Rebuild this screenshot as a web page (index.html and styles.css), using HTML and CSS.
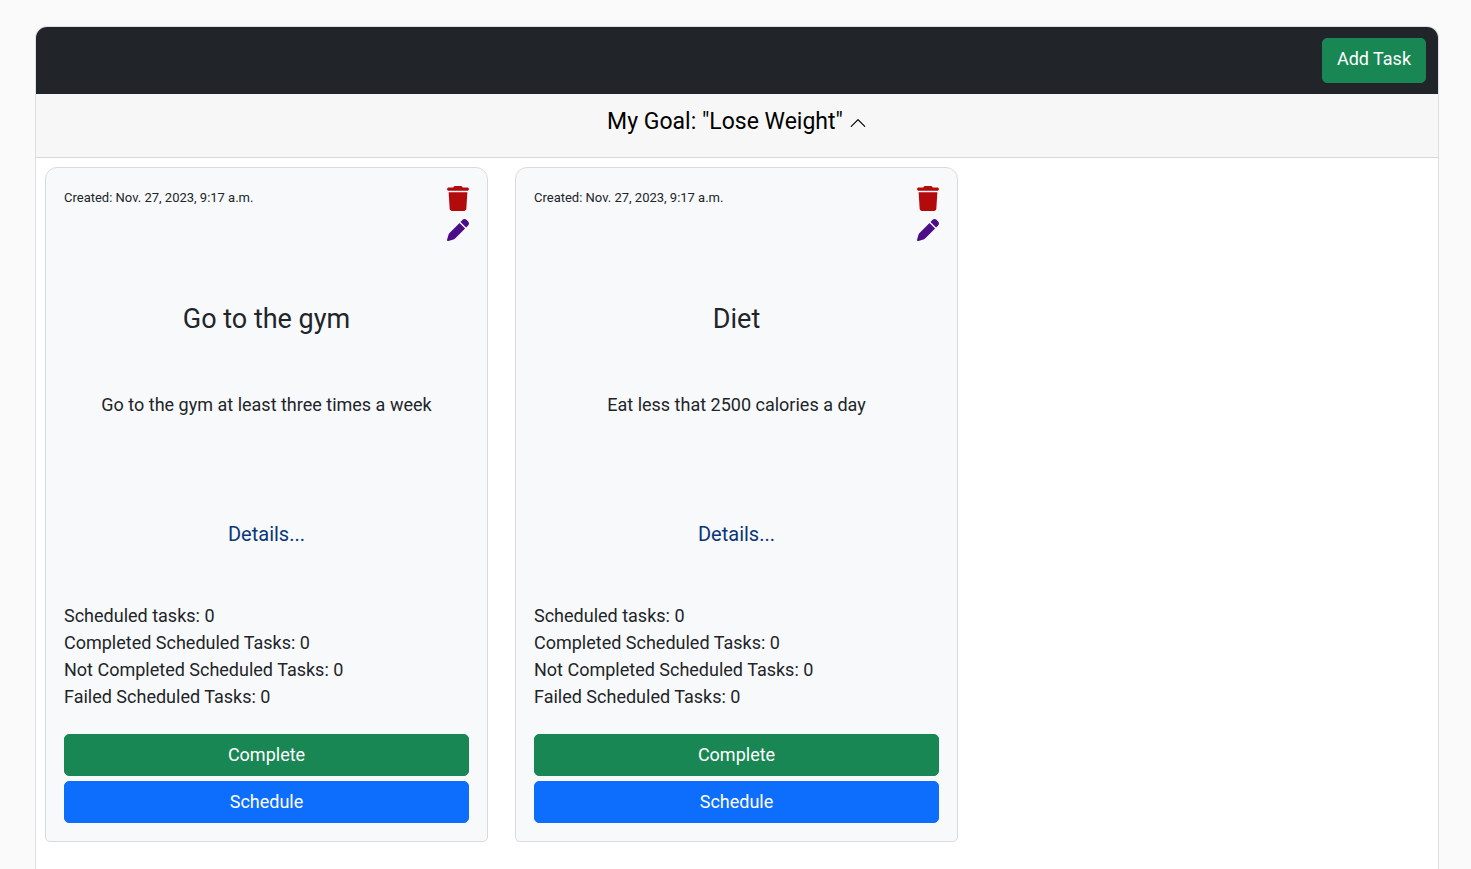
FILE: index.html
```html
<!DOCTYPE html>
<html lang="en">
<head>
<meta charset="utf-8">
<meta name="viewport" content="width=device-width, initial-scale=1">
<title>My Goal</title>
<link rel="stylesheet" href="styles.css">
</head>
<body>
<svg class="sprite" aria-hidden="true">
  <symbol id="trash" viewBox="0 0 448 512"><path d="M135.2 17.7L128 32H32C14.300 32 0 46.300 0 64S14.300 96 32 96H416c17.700 0 32-14.300 32-32s-14.300-32-32-32H320l-7.200-14.300C307.400 6.800 296.300 0 284.200 0H163.800c-12.100 0-23.200 6.800-28.600 17.700zM416 128H32L53.200 467c1.600 25.300 22.600 45 47.900 45H346.900c25.300 0 46.300-19.700 47.900-45L416 128z"/></symbol>
  <symbol id="pen" viewBox="0 0 512 512"><path d="M362.700 19.300L314.300 67.700 444.300 197.700l48.400-48.400c25-25 25-65.500 0-90.500L453.300 19.300c-25-25-65.500-25-90.500 0zm-71 71L58.600 323.500c-10.400 10.400-18 23.300-22.200 37.400L1 481.200C-1.500 489.700 .8 498.800 7 505s15.300 8.500 23.700 6.100l120.300-35.400c14.100-4.200 27-11.800 37.400-22.200L421.700 220.300 291.700 90.300z"/></symbol>
</svg>
<main class="board">
  <header class="toolbar">
    <button class="btn btn-success btn-add" type="button">Add Task</button>
  </header>
  <button class="goal" type="button" aria-expanded="true">
    <span>My Goal: "Lose Weight"</span>
    <svg class="chevron" viewBox="0 0 16 16" aria-hidden="true"><path fill-rule="evenodd" d="M7.646 4.646a.5.5 0 0 1 .708 0l6 6a.5.5 0 0 1-.708.708L8 5.707l-5.646 5.647a.5.5 0 0 1-.708-.708l6-6z"/></svg>
  </button>
  <section class="tasks">
    <article class="card">
      <div class="card-top">
        <small class="created">Created: Nov. 27, 2023, 9:17 a.m.</small>
        <div class="actions">
          <button class="icon-btn" type="button" aria-label="Delete task"><svg class="icon-trash"><use href="#trash"/></svg></button>
          <button class="icon-btn" type="button" aria-label="Edit task"><svg class="icon-pen"><use href="#pen"/></svg></button>
        </div>
      </div>
      <h2 class="title">Go to the gym</h2>
      <p class="description">Go to the gym at least three times a week</p>
      <a class="details" href="#">Details...</a>
      <ul class="stats">
        <li>Scheduled tasks: 0</li>
        <li>Completed Scheduled Tasks: 0</li>
        <li>Not Completed Scheduled Tasks: 0</li>
        <li>Failed Scheduled Tasks: 0</li>
      </ul>
      <div class="card-buttons">
        <button class="btn btn-success" type="button">Complete</button>
        <button class="btn btn-primary" type="button">Schedule</button>
      </div>
    </article>
    <article class="card">
      <div class="card-top">
        <small class="created">Created: Nov. 27, 2023, 9:17 a.m.</small>
        <div class="actions">
          <button class="icon-btn" type="button" aria-label="Delete task"><svg class="icon-trash"><use href="#trash"/></svg></button>
          <button class="icon-btn" type="button" aria-label="Edit task"><svg class="icon-pen"><use href="#pen"/></svg></button>
        </div>
      </div>
      <h2 class="title">Diet</h2>
      <p class="description">Eat less that 2500 calories a day</p>
      <a class="details" href="#">Details...</a>
      <ul class="stats">
        <li>Scheduled tasks: 0</li>
        <li>Completed Scheduled Tasks: 0</li>
        <li>Not Completed Scheduled Tasks: 0</li>
        <li>Failed Scheduled Tasks: 0</li>
      </ul>
      <div class="card-buttons">
        <button class="btn btn-success" type="button">Complete</button>
        <button class="btn btn-primary" type="button">Schedule</button>
      </div>
    </article>
  </section>
</main>
</body>
</html>
```
FILE: styles.css
```css
*, *::before, *::after {
  box-sizing: border-box;
}

body {
  display: flex;
  min-height: 100vh;
  margin: 0;
  padding: 26px 32px 0 35px;
  background: #fafafa;
  color: #212529;
  font-family: Roboto, "Liberation Sans", sans-serif;
  font-size: 18px;
  line-height: 27px;
}

button {
  font: inherit;
  cursor: pointer;
}

.sprite {
  position: absolute;
  width: 0;
  height: 0;
}

.board {
  flex: 1;
  min-width: 0;
  border: 1px solid #dedfe0;
  border-bottom: 0;
  border-radius: 12px 12px 0 0;
  background: #fff;
  overflow: hidden;
}

.toolbar {
  display: flex;
  justify-content: flex-end;
  padding: 11px 12px;
  background: #212529;
}

.btn {
  padding: 7px 14px;
  border: 1px solid transparent;
  border-radius: 5px;
  color: #fff;
  line-height: 26px;
}

.btn-success {
  border-color: #198754;
  background: #198754;
}

.btn-primary {
  border-color: #0d6efd;
  background: #0d6efd;
}

.btn-add {
  padding-bottom: 10px;
}

.goal {
  display: flex;
  align-items: center;
  justify-content: center;
  gap: 6px;
  width: 100%;
  padding: 10px 18px 17px;
  border: 0;
  border-bottom: 1px solid #d8d9da;
  background: #f7f7f7;
  color: #000;
  font-size: 23px;
  line-height: 36px;
}

.chevron {
  width: 18px;
  height: 18px;
  margin-top: 2px;
}

.tasks {
  display: grid;
  grid-template-columns: repeat(3, minmax(0, 1fr));
  gap: 27px;
  padding: 9px 10px 9px 9px;
}

.card {
  display: flex;
  flex-direction: column;
  padding: 18px;
  border: 1px solid #d8dadc;
  border-radius: 12px 12px 5px 5px;
  background: #f8f9fb;
}

.card-top {
  display: flex;
  justify-content: space-between;
  height: 56px;
}

.created {
  font-size: 13px;
  line-height: 24px;
}

.actions {
  display: flex;
  flex-direction: column;
  gap: 8px;
}

.icon-btn {
  display: block;
  padding: 0;
  border: 0;
  background: none;
}

.icon-btn svg {
  display: block;
  width: 22px;
}

.icon-trash {
  height: 25px;
  fill: #b30b0b;
}

.icon-pen {
  height: 22px;
  fill: #4b0e87;
}

.title {
  margin: 61px 0 53px;
  font-size: 27px;
  font-weight: 400;
  line-height: 32px;
  text-align: center;
}

.description {
  margin: 0;
  min-height: 131px;
  padding-top: 3px;
  text-align: center;
}

.details {
  align-self: center;
  margin-bottom: 53px;
  color: #0a3678;
  font-size: 20px;
  line-height: 30px;
  text-decoration: none;
}

.stats {
  margin: 0 0 24px;
  padding: 0;
  list-style: none;
}

.card-buttons {
  display: flex;
  flex-direction: column;
  gap: 5px;
}
```
